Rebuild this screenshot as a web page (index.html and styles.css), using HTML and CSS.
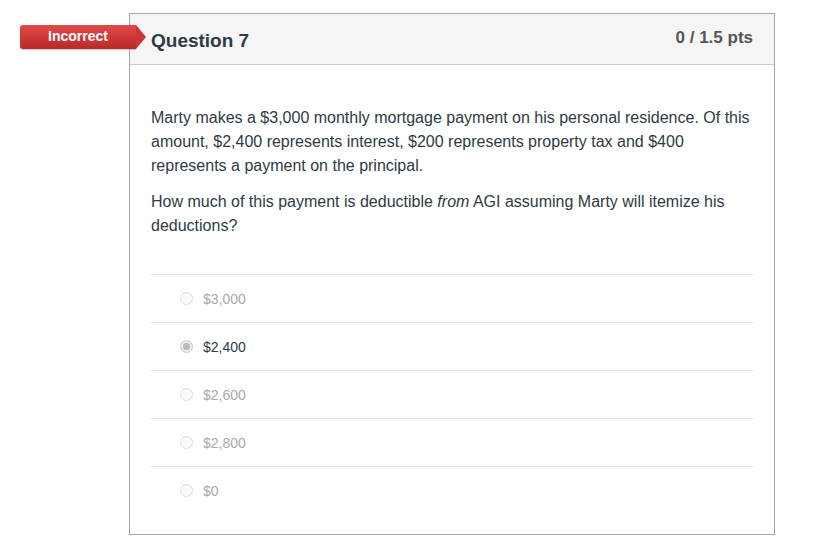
FILE: index.html
```html
<!DOCTYPE html>
<html lang="en">
<head>
  <meta charset="UTF-8" />
  <title>Question 7</title>
  <link rel="stylesheet" href="styles.css">
</head>
<body>
  <div class="question">
    <div class="answer-badge">Incorrect</div>

    <div class="header">
      <h2 class="title">Question 7</h2>
      <div class="points">0 / 1.5 pts</div>
    </div>

    <div class="content">
      <p>Marty makes a $3,000 monthly mortgage payment on his personal residence. Of this amount, $2,400 represents interest, $200 represents property tax and $400 represents a payment on the principal.</p>
      <p>How much of this payment is deductible <em>from</em> AGI assuming Marty will itemize his deductions?</p>

      <div class="answers">
        <div class="answer"><span class="radio"></span><span class="label">$3,000</span></div>
        <div class="answer selected"><span class="radio"></span><span class="label">$2,400</span></div>
        <div class="answer"><span class="radio"></span><span class="label">$2,600</span></div>
        <div class="answer"><span class="radio"></span><span class="label">$2,800</span></div>
        <div class="answer"><span class="radio"></span><span class="label">$0</span></div>
      </div>
    </div>
  </div>
</body>
</html>
```

FILE: styles.css
```css
body {
  font-family: "Liberation Sans", Arial, sans-serif;
  color: #2d3b45;
  background-color: #fff;
  margin: 0;
  padding: 13px 0 0 129px;
}

.question {
  position: relative;
  width: 644px;
  border: 1px solid #aaaaaa;
}

.answer-badge {
  position: absolute;
  left: -110px;
  top: 11px;
  width: 116px;
  height: 24px;
  line-height: 23px;
  text-align: center;
  color: #fff;
  font-size: 14px;
  font-weight: bold;
  background: linear-gradient(#e24a4a, #b92828);
  border-radius: 3px 0 0 3px;
  box-shadow: 0 1px 1px rgba(0, 0, 0, 0.2);
}

.answer-badge::after {
  content: "";
  position: absolute;
  right: -10px;
  top: 0;
  border-top: 12px solid transparent;
  border-bottom: 12px solid transparent;
  border-left: 10px solid #cc3535;
}

.header {
  display: flex;
  justify-content: space-between;
  align-items: flex-start;
  height: 50px;
  padding: 0 21px;
  background-color: #f5f5f5;
  border-bottom: 1px solid #c7cdd1;
}

.title {
  margin: 16px 0 0;
  font-size: 19px;
  line-height: 22px;
}

.points {
  margin-top: 14px;
  font-size: 17px;
  font-weight: bold;
  color: #555;
}

.content {
  padding: 41px 21px 20px;
  font-size: 16px;
  line-height: 24px;
}

.content p {
  margin: 0 0 12px;
}

.answers {
  margin-top: 36px;
}

.answer {
  display: flex;
  align-items: center;
  gap: 10px;
  height: 47px;
  padding-left: 29px;
  border-top: 1px solid #e5e5e5;
  font-size: 14px;
  color: #a8a8a8;
}

.radio {
  width: 11px;
  height: 11px;
  border: 1px solid #dcdcdc;
  border-radius: 50%;
  background-color: #fafafa;
  box-sizing: content-box;
}

.selected {
  color: #2d3b45;
}

.selected .radio {
  border-color: #c8c8c8;
  background: radial-gradient(circle, #bdbdbd 0 3.5px, #eeeeee 4px);
}
```
